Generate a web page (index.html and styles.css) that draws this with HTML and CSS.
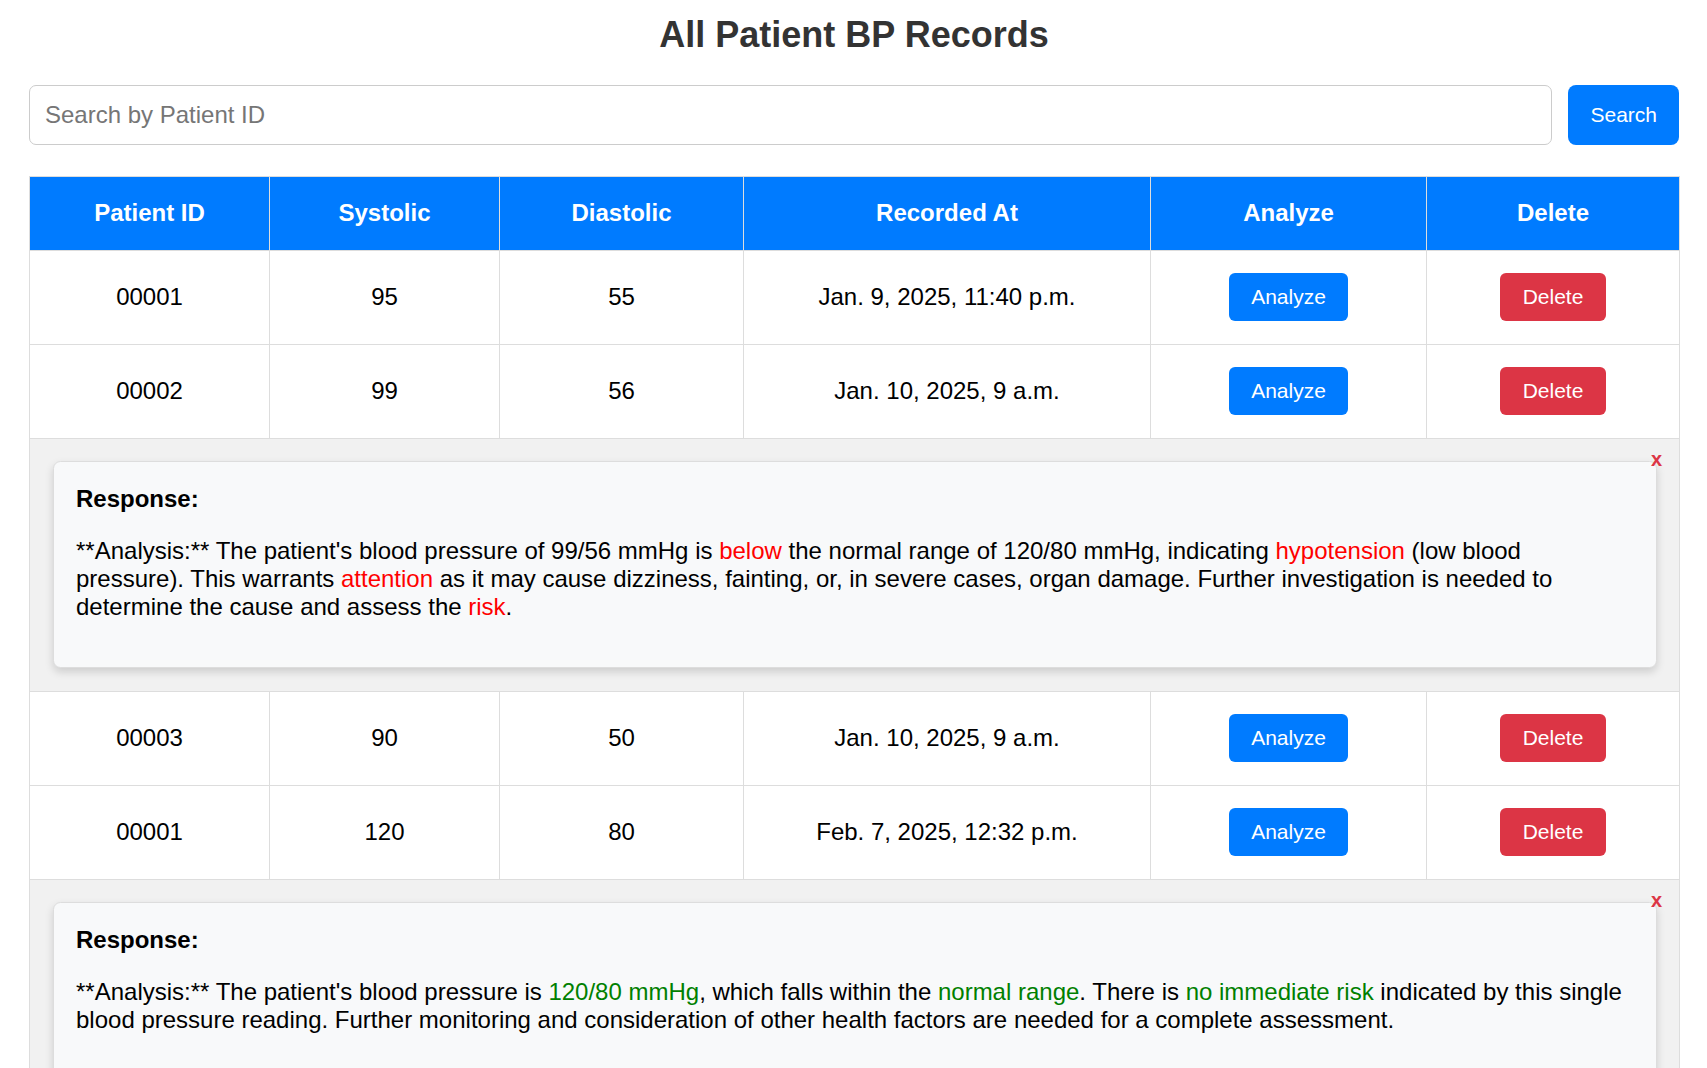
FILE: index.html
```html
<!DOCTYPE html>
<html lang="en">
<head>
<meta charset="utf-8">
<title>All Patient BP Records</title>
<link rel="stylesheet" href="styles.css">
</head>
<body>
<div class="container">
  <h2 class="title">All Patient BP Records</h2>
  <form class="search-row" onsubmit="return false;">
    <input class="search-input" type="text" placeholder="Search by Patient ID">
    <button class="btn btn-primary search-btn" type="submit">Search</button>
  </form>
  <table class="records">
    <colgroup>
      <col class="c-id"><col class="c-sys"><col class="c-dia"><col class="c-rec"><col class="c-an"><col class="c-del">
    </colgroup>
    <thead>
      <tr>
        <th>Patient ID</th><th>Systolic</th><th>Diastolic</th><th>Recorded At</th><th>Analyze</th><th>Delete</th>
      </tr>
    </thead>
    <tbody>
      <tr>
        <td>00001</td><td>95</td><td>55</td><td>Jan. 9, 2025, 11:40 p.m.</td>
        <td><button class="btn btn-primary">Analyze</button></td>
        <td><button class="btn btn-danger">Delete</button></td>
      </tr>
      <tr>
        <td>00002</td><td>99</td><td>56</td><td>Jan. 10, 2025, 9 a.m.</td>
        <td><button class="btn btn-primary">Analyze</button></td>
        <td><button class="btn btn-danger">Delete</button></td>
      </tr>
      <tr class="resp-row">
        <td colspan="6" class="resp-cell">
          <div class="resp-wrap">
            <button class="close-btn">x</button>
            <div class="resp-card">
              <strong>Response:</strong>
              <p>**Analysis:** The patient's blood pressure of 99/56 mmHg is <span class="bad">below</span> the normal range of 120/80 mmHg, indicating <span class="bad">hypotension</span> (low blood pressure). This warrants <span class="bad">attention</span> as it may cause dizziness, fainting, or, in severe cases, organ damage. Further investigation is needed to determine the cause and assess the <span class="bad">risk</span>.</p>
            </div>
          </div>
        </td>
      </tr>
      <tr>
        <td>00003</td><td>90</td><td>50</td><td>Jan. 10, 2025, 9 a.m.</td>
        <td><button class="btn btn-primary">Analyze</button></td>
        <td><button class="btn btn-danger">Delete</button></td>
      </tr>
      <tr>
        <td>00001</td><td>120</td><td>80</td><td>Feb. 7, 2025, 12:32 p.m.</td>
        <td><button class="btn btn-primary">Analyze</button></td>
        <td><button class="btn btn-danger">Delete</button></td>
      </tr>
      <tr class="resp-row">
        <td colspan="6" class="resp-cell">
          <div class="resp-wrap">
            <button class="close-btn">x</button>
            <div class="resp-card">
              <strong>Response:</strong>
              <p>**Analysis:** The patient's blood pressure is <span class="good">120/80 mmHg</span>, which falls within the <span class="good">normal range</span>. There is <span class="good">no immediate risk</span> indicated by this single blood pressure reading. Further monitoring and consideration of other health factors are needed for a complete assessment.</p>
            </div>
          </div>
        </td>
      </tr>
    </tbody>
  </table>
</div>
</body>
</html>
```

FILE: styles.css
```css
html, body {
  margin: 0;
  padding: 0;
  background: #fff;
}

body {
  font-family: "Liberation Sans", Arial, sans-serif;
  font-size: 24px;
  color: #000;
}

.container {
  padding: 0 28px 0 29px;
}

.title {
  margin: 14px 0 29px;
  font-size: 36px;
  font-weight: bold;
  color: #333;
  text-align: center;
}

.search-row {
  display: flex;
  gap: 16px;
  margin: 0 0 30.5px;
}

.search-input {
  flex: 1;
  box-sizing: border-box;
  height: 60px;
  padding: 0 15px;
  font-family: inherit;
  font-size: 24px;
  color: #000;
  border: 1.5px solid #ccc;
  border-radius: 7px;
  background: #fff;
  outline: none;
}

.search-input::placeholder {
  color: #767676;
}

.btn {
  font-family: inherit;
  font-size: 21px;
  line-height: normal;
  color: #fff;
  border: none;
  border-radius: 6px;
  padding: 12px 22.5px;
  cursor: pointer;
  vertical-align: middle;
}

.btn-primary {
  background: #007bff;
}

.btn-danger {
  background: #dc3545;
}

.search-btn {
  height: 60px;
  padding: 0 22px;
  border-radius: 8px;
}

.records {
  width: 100%;
  border-collapse: collapse;
  table-layout: fixed;
}

.c-id { width: 240px; }
.c-sys { width: 230px; }
.c-dia { width: 244px; }
.c-rec { width: 407px; }
.c-an { width: 276px; }
.c-del { width: 253px; }

.records th,
.records td {
  border: 1px solid #ddd;
  padding: 22.5px;
  text-align: center;
  font-size: 24px;
}

.records th {
  background: #007bff;
  color: #fff;
  font-weight: bold;
}

.records td {
  color: #000;
}

.records td.resp-cell {
  padding: 0;
  background: #f1f1f1;
  text-align: left;
}

.resp-wrap {
  position: relative;
  padding: 22.5px;
}

.close-btn {
  position: absolute;
  top: 10px;
  right: 17px;
  margin: 0;
  padding: 0;
  border: none;
  background: transparent;
  color: #dc3545;
  font-family: inherit;
  font-size: 20px;
  font-weight: bold;
  line-height: 1;
  cursor: pointer;
}

.resp-card {
  background: #f8f9fa;
  border: 1px solid #ddd;
  border-radius: 7.5px;
  padding: 22.5px;
  box-shadow: 0 4px 9px rgba(0, 0, 0, 0.15);
}

.resp-card strong {
  font-weight: bold;
}

.resp-card p {
  margin: 24px 0;
}

.bad {
  color: #ff0000;
}

.good {
  color: #008000;
}
```
